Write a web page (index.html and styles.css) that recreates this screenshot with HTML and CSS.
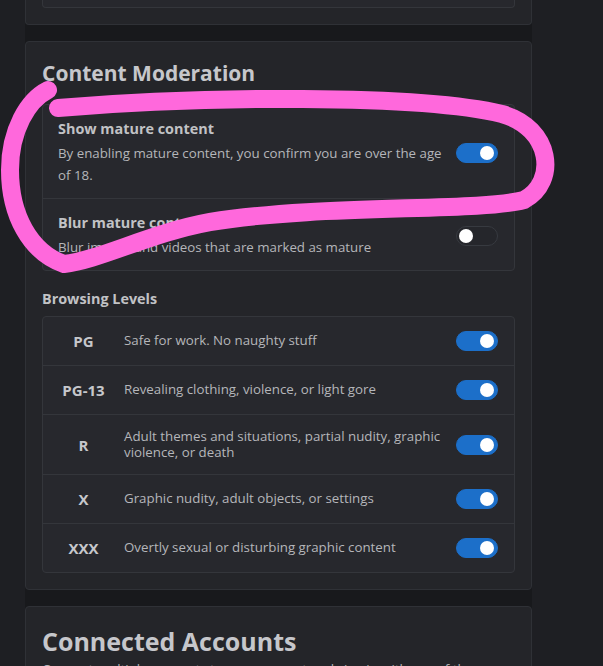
FILE: index.html
```html
<!DOCTYPE html>
<html>
<head>
<meta charset="utf-8">
<link rel="stylesheet" href="styles.css">
</head>
<body>
<div class="page">
  <section class="card card-cut">
    <div class="box box-cut"></div>
  </section>

  <section class="card">
    <h2 class="card-title">Content Moderation</h2>
    <div class="box">
      <div class="setting">
        <div class="setting-text">
          <div class="setting-title">Show mature content</div>
          <div class="setting-desc">By enabling mature content, you confirm you are over the age of 18.</div>
        </div>
        <span class="switch on"><span class="thumb"></span></span>
      </div>
      <div class="setting">
        <div class="setting-text">
          <div class="setting-title">Blur mature content</div>
          <div class="setting-desc">Blur images and videos that are marked as mature</div>
        </div>
        <span class="switch"><span class="thumb"></span></span>
      </div>
    </div>

    <h3 class="sub-title">Browsing Levels</h3>
    <div class="box levels">
      <div class="level">
        <div class="level-name">PG</div>
        <div class="level-desc">Safe for work. No naughty stuff</div>
        <span class="switch on"><span class="thumb"></span></span>
      </div>
      <div class="level">
        <div class="level-name">PG-13</div>
        <div class="level-desc">Revealing clothing, violence, or light gore</div>
        <span class="switch on"><span class="thumb"></span></span>
      </div>
      <div class="level">
        <div class="level-name">R</div>
        <div class="level-desc">Adult themes and situations, partial nudity, graphic violence, or death</div>
        <span class="switch on"><span class="thumb"></span></span>
      </div>
      <div class="level">
        <div class="level-name">X</div>
        <div class="level-desc">Graphic nudity, adult objects, or settings</div>
        <span class="switch on"><span class="thumb"></span></span>
      </div>
      <div class="level">
        <div class="level-name">XXX</div>
        <div class="level-desc">Overtly sexual or disturbing graphic content</div>
        <span class="switch on"><span class="thumb"></span></span>
      </div>
    </div>
  </section>

  <section class="card">
    <h2 class="card-title big">Connected Accounts</h2>
    <p class="card-desc">Connect multiple accounts to your account and sign in with any of them</p>
  </section>
</div>

<svg class="scribble" width="603" height="666" viewBox="0 0 603 666" xmlns="http://www.w3.org/2000/svg">
  <path d="M58,108 C200,96 420,94 502,114 C552,128 558,182 524,200 C478,212 320,204 210,222 C150,233 100,260 64,264 C30,252 10,215 10,170 C10,130 28,100 48,90"
        fill="none" stroke="#ff68dc" stroke-width="18" stroke-linecap="round" stroke-linejoin="round"/>
</svg>
</body>
</html>
```

FILE: styles.css
```css
html, body {
  margin: 0;
  padding: 0;
}
body {
  background: #1e1f23;
  font-family: "Open Sans", "Noto Sans", sans-serif;
  color: #c1c2c5;
  height: 666px;
  overflow: hidden;
  position: relative;
}
.page {
  width: 507px;
  margin-left: 25px;
  background: #18191c;
  display: flex;
  flex-direction: column;
  gap: 16px;
  min-height: 666px;
}
.card {
  background: #242529;
  border: 1px solid #2f3136;
  border-radius: 4px;
  padding: 16px 16px 16px 16px;
}
.card-cut {
  border-top: none;
  border-radius: 0 0 4px 4px;
  padding-top: 0;
}
.box {
  background: #27282d;
  border: 1px solid #34363b;
  border-radius: 4px;
}
.box-cut {
  height: 7px;
  border-top: none;
  border-radius: 0 0 4px 4px;
}
.card-title {
  margin: 0 0 16px 0;
  font-size: 21px;
  line-height: 30px;
  font-weight: 700;
  color: #c6c7cb;
}
.card-title.big {
  font-size: 25px;
  line-height: 36px;
  margin-bottom: 0;
}
.card-desc {
  margin: 0;
  font-size: 13.3px;
  line-height: 20px;
  color: #b3b4b8;
}
.setting {
  display: flex;
  align-items: center;
  padding: 14px 16px 12px 15px;
  gap: 8px;
}
.setting + .setting {
  border-top: 1px solid #34363b;
}
.setting-text {
  flex: 1;
}
.setting-title {
  font-size: 14.4px;
  line-height: 20px;
  font-weight: 700;
  color: #c1c2c5;
}
.setting-desc {
  margin-top: 3px;
  font-size: 13.3px;
  line-height: 22px;
  color: #b5b6ba;
}
.sub-title {
  margin: 18px 0 7px 0;
  font-size: 14.4px;
  line-height: 20px;
  font-weight: 700;
  color: #c1c2c5;
}
.level {
  display: flex;
  align-items: center;
  padding: 14px 16px 14px 0;
}
.level + .level {
  border-top: 1px solid #34363b;
}
.level-name {
  width: 81px;
  flex: none;
  text-align: center;
  font-size: 15px;
  font-weight: 700;
  color: #c6c7cb;
}
.level-desc {
  flex: 1;
  font-size: 13.3px;
  line-height: 15.5px;
  color: #b5b6ba;
  padding-right: 12px;
}
.switch {
  flex: none;
  width: 42px;
  height: 20px;
  border-radius: 10px;
  box-sizing: border-box;
  background: #25262b;
  border: 1px solid #373a40;
  position: relative;
  display: block;
}
.switch .thumb {
  position: absolute;
  top: 2px;
  left: 2px;
  width: 14px;
  height: 14px;
  border-radius: 50%;
  background: #ffffff;
}
.switch.on {
  background: #1c6fc9;
  border-color: #1c6fc9;
}
.switch.on .thumb {
  left: auto;
  right: 3px;
}
.scribble {
  position: absolute;
  left: 0;
  top: 0;
  pointer-events: none;
}
```
